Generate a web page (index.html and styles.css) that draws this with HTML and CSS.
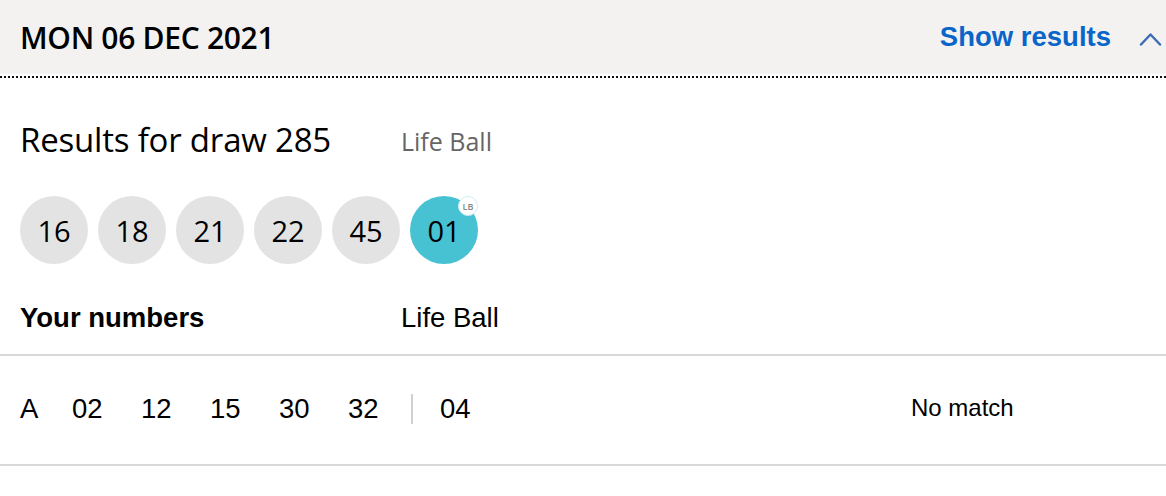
FILE: index.html
```html
<!DOCTYPE html>
<html lang="en">
<head>
  <meta charset="UTF-8" />
  <meta name="viewport" content="width=device-width, initial-scale=1.0"/>
  <title>Draw results</title>
  <link rel="stylesheet" href="styles.css">
</head>
<body>

  <!-- Draw header -->
  <div class="draw-header">
    <div class="draw-header-inner">
      <h1 class="draw-date">MON 06 DEC 2021</h1>
      <a class="toggle-link" href="#">
        <span>Show results</span>
        <svg class="chevron" width="24" height="14" viewBox="0 0 24 14">
          <polyline points="2,12.5 11.5,2.5 21,12.5" fill="none" stroke="#3d6db5" stroke-width="2.5" stroke-linecap="round" stroke-linejoin="round"/>
        </svg>
      </a>
    </div>
  </div>

  <div class="draw-body">
    <div class="result-head">
      <h2 class="result-title">Results for draw 285</h2>
      <span class="result-label">Life Ball</span>
    </div>

    <div class="balls">
      <div class="ball">16</div>
      <div class="ball">18</div>
      <div class="ball">21</div>
      <div class="ball">22</div>
      <div class="ball">45</div>
      <div class="ball ball-life">01<span class="lb-badge">LB</span></div>
    </div>

    <div class="numbers-head">
      <span class="numbers-title">Your numbers</span>
      <span class="numbers-label">Life Ball</span>
    </div>
  </div>

  <div class="line-row">
    <div class="line-picks">
      <span class="line-letter">A</span>
      <span class="pick">02</span>
      <span class="pick">12</span>
      <span class="pick">15</span>
      <span class="pick">30</span>
      <span class="pick">32</span>
      <span class="pick-sep"></span>
      <span class="pick">04</span>
    </div>
    <div class="line-result">No match</div>
  </div>

</body>
</html>
```

FILE: styles.css
```css
body {
  margin: 0;
  padding: 0;
  background: #fff;
  color: #000;
  font-family: 'Open Sans', 'Noto Sans', sans-serif;
}

/* Header with dotted rule below */
.draw-header {
  padding-bottom: 4px;
  background: repeating-linear-gradient(90deg, #111 0 2px, transparent 2px 4px) left bottom / 100% 2px no-repeat;
}

.draw-header-inner {
  display: flex;
  align-items: center;
  justify-content: space-between;
  height: 74px;
  padding: 0 3px 0 20px;
  background: #f3f2f1;
}

.draw-date {
  margin: 0;
  font-size: 30px;
  font-weight: 600;
  letter-spacing: -0.3px;
}

.toggle-link {
  display: flex;
  align-items: center;
  gap: 28px;
  color: #0a65c9;
  text-decoration: none;
  font-family: 'Liberation Sans', Arial, sans-serif;
  font-weight: bold;
  font-size: 27.5px;
}

.chevron {
  margin-top: 4px;
}

/* Results */
.draw-body {
  padding: 39px 20px 0;
}

.result-head {
  display: grid;
  grid-template-columns: 381px auto;
  align-items: center;
  height: 40px;
}

.result-title {
  margin: 0;
  font-size: 33px;
  font-weight: 400;
  letter-spacing: -0.2px;
}

.result-label {
  font-size: 25px;
  color: #666;
  padding-top: 3px;
}

.balls {
  display: flex;
  gap: 10px;
  margin-top: 39px;
}

.ball {
  position: relative;
  width: 68px;
  height: 68px;
  border-radius: 50%;
  background: #e3e3e3;
  display: flex;
  align-items: center;
  justify-content: center;
  font-size: 29px;
  line-height: 1;
}

.ball-life {
  background: #46c2d3;
}

.lb-badge {
  position: absolute;
  top: 0;
  right: 0;
  width: 20px;
  height: 20px;
  box-sizing: border-box;
  border-radius: 50%;
  background: #fff;
  border: 1px solid #cfeef3;
  font-size: 9px;
  font-weight: 600;
  color: #888;
  display: flex;
  align-items: center;
  justify-content: center;
}

.numbers-head {
  display: grid;
  grid-template-columns: 381px auto;
  align-items: center;
  height: 32px;
  margin-top: 38px;
  padding-bottom: 20px;
  font-family: 'Liberation Sans', Arial, sans-serif;
  font-size: 27.5px;
}

.numbers-title {
  font-weight: bold;
}

/* Line of picks */
.line-row {
  display: grid;
  grid-template-columns: 891px auto;
  align-items: center;
  height: 108px;
  padding: 0 20px;
  border-top: 2px solid #d9d9d9;
  border-bottom: 2px solid #d9d9d9;
  font-family: 'Liberation Sans', Arial, sans-serif;
}

.line-picks {
  display: flex;
  align-items: center;
  font-size: 27.5px;
  padding-bottom: 2px;
}

.line-letter {
  width: 52px;
}

.pick {
  width: 69px;
}

.line-picks .pick:nth-of-type(6) {
  width: 63px;
}

.pick-sep {
  width: 2px;
  height: 30px;
  background: #d0d0d0;
  margin-right: 27px;
}

.line-result {
  font-size: 24px;
  padding-bottom: 4px;
}
```
